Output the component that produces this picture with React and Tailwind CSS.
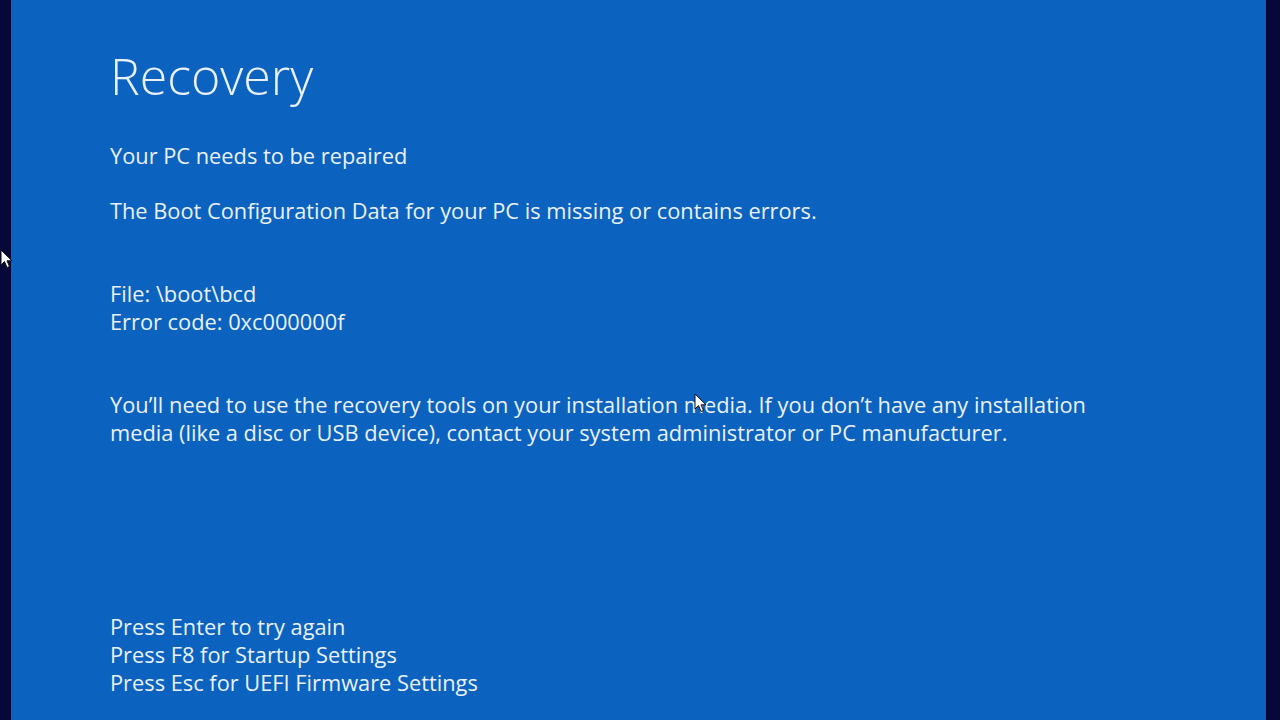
const Cursor = ({ className }) => (
	<svg className={className} width="13" height="21" viewBox="0 0 13 21">
		<path d="M1 1 L1 16 L4.5 12.5 L7 18.5 L9.5 17.5 L7 11.8 L12 11.8 Z" fill="#fff" stroke="#111" strokeWidth="1" strokeLinejoin="round" />
	</svg>
);

const App = () => {
	return (
		<div className="relative flex w-[1280px] h-[720px] overflow-hidden bg-[#0a0a3c]" style={{ fontFamily: '"Open Sans", "Noto Sans", sans-serif' }}>
			<div className="w-[11px] shrink-0 bg-[#07073a]" />
			<div className="flex-1 bg-[#0b62bf] pl-[99px] text-[#eaf1fb]">
				<h1 className="mt-[46px] text-[50px] leading-[60px] font-light">Recovery</h1>
				<p className="mt-[36px] text-[21.8px] leading-[28px]">Your PC needs to be repaired</p>
				<p className="mt-[27px] text-[21.8px] leading-[28px]">The Boot Configuration Data for your PC is missing or contains errors.</p>
				<div className="mt-[55px] text-[21.8px] leading-[28px]">
					<p>File: \boot\bcd</p>
					<p>Error code: 0xc000000f</p>
				</div>
				<div className="mt-[55px] text-[21.8px] leading-[28px] w-[1100px]">
					<p>You’ll need to use the recovery tools on your installation media. If you don’t have any installation</p>
					<p>media (like a disc or USB device), contact your system administrator or PC manufacturer.</p>
				</div>
				<div className="mt-[166px] text-[21.8px] leading-[28px]">
					<p>Press Enter to try again</p>
					<p>Press F8 for Startup Settings</p>
					<p>Press Esc for UEFI Firmware Settings</p>
				</div>
			</div>
			<div className="w-[14px] shrink-0 bg-[#07073a]" />
			<Cursor className="absolute left-0 top-[249px]" />
			<Cursor className="absolute left-[694px] top-[393px]" />
		</div>
	);
};

export default App;
